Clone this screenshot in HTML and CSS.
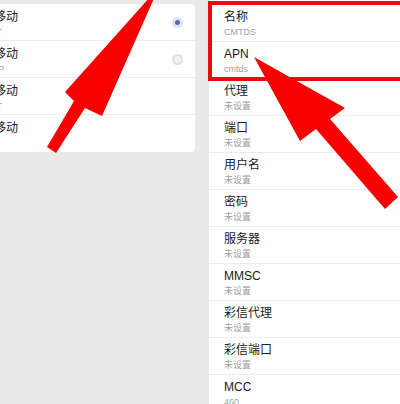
FILE: index.html
```html
<!DOCTYPE html>
<html lang="zh">
<head>
<meta charset="utf-8">
<title>APN</title>
<link rel="stylesheet" href="styles.css">
</head>
<body>
<div class="screen">
  <div class="list-card">
    <div class="net-row">
      <div class="net-text"><div class="net-title">中国移动</div><div class="net-sub">CMNET</div></div>
      <span class="radio radio-on"></span>
    </div>
    <div class="net-row">
      <div class="net-text"><div class="net-title">中国移动</div><div class="net-sub">CMWAP</div></div>
      <span class="radio radio-off"></span>
    </div>
    <div class="net-row">
      <div class="net-text"><div class="net-title">中国移动</div><div class="net-sub">CMNET</div></div>
    </div>
    <div class="net-row">
      <div class="net-text"><div class="net-title">中国移动</div></div>
    </div>
  </div>

  <div class="detail">
    <div class="field"><div class="f-title">名称</div><div class="f-sub">CMTDS</div></div>
    <div class="field"><div class="f-title">APN</div><div class="f-sub">cmtds</div></div>
    <div class="field"><div class="f-title">代理</div><div class="f-sub">未设置</div></div>
    <div class="field"><div class="f-title">端口</div><div class="f-sub">未设置</div></div>
    <div class="field"><div class="f-title">用户名</div><div class="f-sub">未设置</div></div>
    <div class="field"><div class="f-title">密码</div><div class="f-sub">未设置</div></div>
    <div class="field"><div class="f-title">服务器</div><div class="f-sub">未设置</div></div>
    <div class="field"><div class="f-title">MMSC</div><div class="f-sub">未设置</div></div>
    <div class="field"><div class="f-title">彩信代理</div><div class="f-sub">未设置</div></div>
    <div class="field"><div class="f-title">彩信端口</div><div class="f-sub">未设置</div></div>
    <div class="field"><div class="f-title">MCC</div><div class="f-sub">460</div></div>
  </div>

  <div class="highlight"></div>
  <svg class="arrows" width="400" height="404" viewBox="0 0 400 404">
    <polygon points="159,-13 65,92 74,101 47,147 56,153 85,108 102,116" />
    <polygon points="254,57 345,108 330,119 398,197 385,209 316,129 300,141" />
  </svg>
</div>
</body>
</html>
```
FILE: styles.css
```css
html, body {
  margin: 0;
  padding: 0;
}
body {
  width: 400px;
  height: 404px;
  overflow: hidden;
  background: #e9e9e9;
  font-family: "Liberation Sans", "Noto Sans CJK SC", sans-serif;
}
.screen {
  position: relative;
  width: 400px;
  height: 404px;
  display: flex;
  align-items: flex-start;
  gap: 14px;
}
.list-card {
  margin-top: 4px;
  margin-left: -42px;
  width: 237px;
  flex: none;
  background: #ffffff;
  border-radius: 0 4px 4px 0;
  padding-left: 12px;
  box-sizing: border-box;
}
.net-row {
  height: 37px;
  box-sizing: border-box;
  border-bottom: 1px solid #ececec;
  display: flex;
  align-items: center;
  justify-content: space-between;
  padding-right: 12px;
}
.net-row:last-child {
  border-bottom: none;
}
.net-text {
  align-self: flex-start;
  padding-top: 6px;
}
.net-title {
  font-size: 12px;
  line-height: 14px;
  color: #1a1a1a;
}
.net-sub {
  margin-top: 3px;
  font-size: 9px;
  line-height: 11px;
  color: #a0a0a0;
}
.radio {
  width: 11px;
  height: 11px;
  border-radius: 50%;
  box-sizing: border-box;
}
.radio-on {
  background: #dfe3f4;
  display: flex;
  align-items: center;
  justify-content: center;
}
.radio-on::after {
  content: "";
  width: 5px;
  height: 5px;
  border-radius: 50%;
  background: #5b68b8;
}
.radio-off {
  border: 2px solid #e0e0e0;
  background: #f0f0f0;
}
.detail {
  flex: 1;
  height: 404px;
  background: #ffffff;
  padding-top: 5px;
  box-sizing: border-box;
  overflow: hidden;
}
.field {
  height: 37px;
  box-sizing: border-box;
  border-bottom: 1px solid #ececec;
  padding: 5px 0 0 15px;
}
.f-title {
  font-size: 12px;
  line-height: 14px;
  color: #1a1a1a;
}
.f-sub {
  margin-top: 3px;
  font-size: 9px;
  line-height: 11px;
  color: #a0a0a0;
}
.highlight {
  position: absolute;
  left: 208px;
  top: 1px;
  width: 200px;
  height: 80px;
  border: 4px solid #ec0a10;
  box-sizing: border-box;
}
.arrows {
  position: absolute;
  left: 0;
  top: 0;
  pointer-events: none;
}
.arrows polygon {
  fill: #f60000;
}
```
